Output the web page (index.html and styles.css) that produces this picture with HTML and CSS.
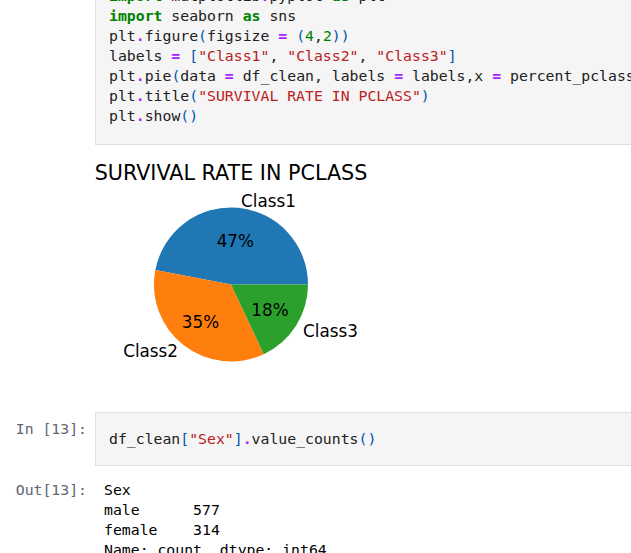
FILE: index.html
```html
<!DOCTYPE html>
<html>
<head>
<meta charset="utf-8">
<link rel="stylesheet" href="styles.css">
</head>
<body>
<div class="notebook">
  <div class="cell">
    <div class="prompt"></div>
    <div class="input-area input-first"><pre class="code"><span class="kw">import</span> matplotlib<span class="op">.</span>pyplot <span class="kw">as</span> plt
<span class="kw">import</span> seaborn <span class="kw">as</span> sns
plt<span class="op">.</span>figure<span class="br">(</span>figsize <span class="op">=</span> <span class="br">(</span><span class="num">4</span>,<span class="num">2</span><span class="br">))</span>
labels <span class="op">=</span> <span class="br">[</span><span class="str">"Class1"</span>, <span class="str">"Class2"</span>, <span class="str">"Class3"</span><span class="br">]</span>
plt<span class="op">.</span>pie<span class="br">(</span>data <span class="op">=</span> df_clean, labels <span class="op">=</span> labels,x <span class="op">=</span> percent_pclass, autopct <span class="op">=</span> <span class="str">"%.0f%%"</span><span class="br">)</span>
plt<span class="op">.</span>title<span class="br">(</span><span class="str">"SURVIVAL RATE IN PCLASS"</span><span class="br">)</span>
plt<span class="op">.</span>show<span class="br">()</span></pre></div>
  </div>

  <div class="cell output-figure">
    <div class="prompt"></div>
    <div class="figure">
      <svg class="pie" width="300" height="225" viewBox="95 150 300 225" xmlns="http://www.w3.org/2000/svg">
        <text class="title" x="231" y="179.5" text-anchor="middle">SURVIVAL RATE IN PCLASS</text>
        <path d="M231,284.5 L308,284.5 A77,77 0 0 0 155.36,270.07 Z" fill="#1f77b4"/>
        <path d="M231,284.5 L155.36,270.07 A77,77 0 0 0 263.79,354.17 Z" fill="#ff7f0e"/>
        <path d="M231,284.5 L263.79,354.17 A77,77 0 0 0 308,284.5 Z" fill="#2ca02c"/>
        <text class="lbl" x="241" y="206.5">Class1</text>
        <text class="lbl" x="178" y="356.5" text-anchor="end">Class2</text>
        <text class="lbl" x="303" y="337">Class3</text>
        <text class="lbl" x="235.3" y="246.5" text-anchor="middle">47%</text>
        <text class="lbl" x="200.5" y="327.5" text-anchor="middle">35%</text>
        <text class="lbl" x="270" y="316" text-anchor="middle">18%</text>
      </svg>
    </div>
  </div>

  <div class="cell cell-second">
    <div class="prompt prompt-in">In [13]:</div>
    <div class="input-area"><pre class="code">df_clean<span class="br">[</span><span class="str">"Sex"</span><span class="br">]</span><span class="op">.</span>value_counts<span class="br">()</span></pre></div>
  </div>

  <div class="cell output-text-cell">
    <div class="prompt prompt-out">Out[13]:</div>
    <pre class="output-text">Sex
male      577
female    314
Name: count, dtype: int64</pre>
  </div>
</div>
</body>
</html>
```

FILE: styles.css
```css
html, body {
  margin: 0;
  padding: 0;
  background: #ffffff;
  overflow: hidden;
}

.notebook {
  width: 780px;
  margin-top: -31px;
  font-family: "DejaVu Sans Mono", "Liberation Mono", monospace;
  font-size: 14.8px;
  line-height: 20px;
  color: #212121;
}

.cell {
  display: flex;
  align-items: flex-start;
}

.prompt {
  width: 95px;
  flex: none;
  box-sizing: border-box;
  padding-right: 8px;
  text-align: right;
  color: #5f6675;
  white-space: pre;
}

.prompt-in {
  padding-top: 7px;
}

.input-area {
  flex: 1;
  min-width: 0;
  background: #f5f5f5;
  border: 1px solid #e0e0e0;
  padding: 16px 13px;
}

.input-first {
  padding-bottom: 18px;
}

pre {
  margin: 0;
  font: inherit;
  white-space: pre;
}

.kw { color: #008000; font-weight: bold; }
.op { color: #aa22ff; font-weight: bold; }
.br { color: #0055aa; }
.num { color: #008000; }
.str { color: #ba2121; }

.output-figure {
  margin-top: 5px;
}

.figure {
  flex: 1;
}

.pie {
  display: block;
  overflow: visible;
}

.pie .title {
  font-family: "DejaVu Sans", sans-serif;
  font-size: 20.7px;
  fill: #000000;
}

.pie .lbl {
  font-family: "DejaVu Sans", sans-serif;
  font-size: 16.8px;
  fill: #000000;
}

.cell-second {
  margin-top: 37px;
}

.output-text-cell {
  margin-top: 14px;
}

.output-text {
  flex: 1;
  padding-left: 9px;
  color: #000000;
}
```
